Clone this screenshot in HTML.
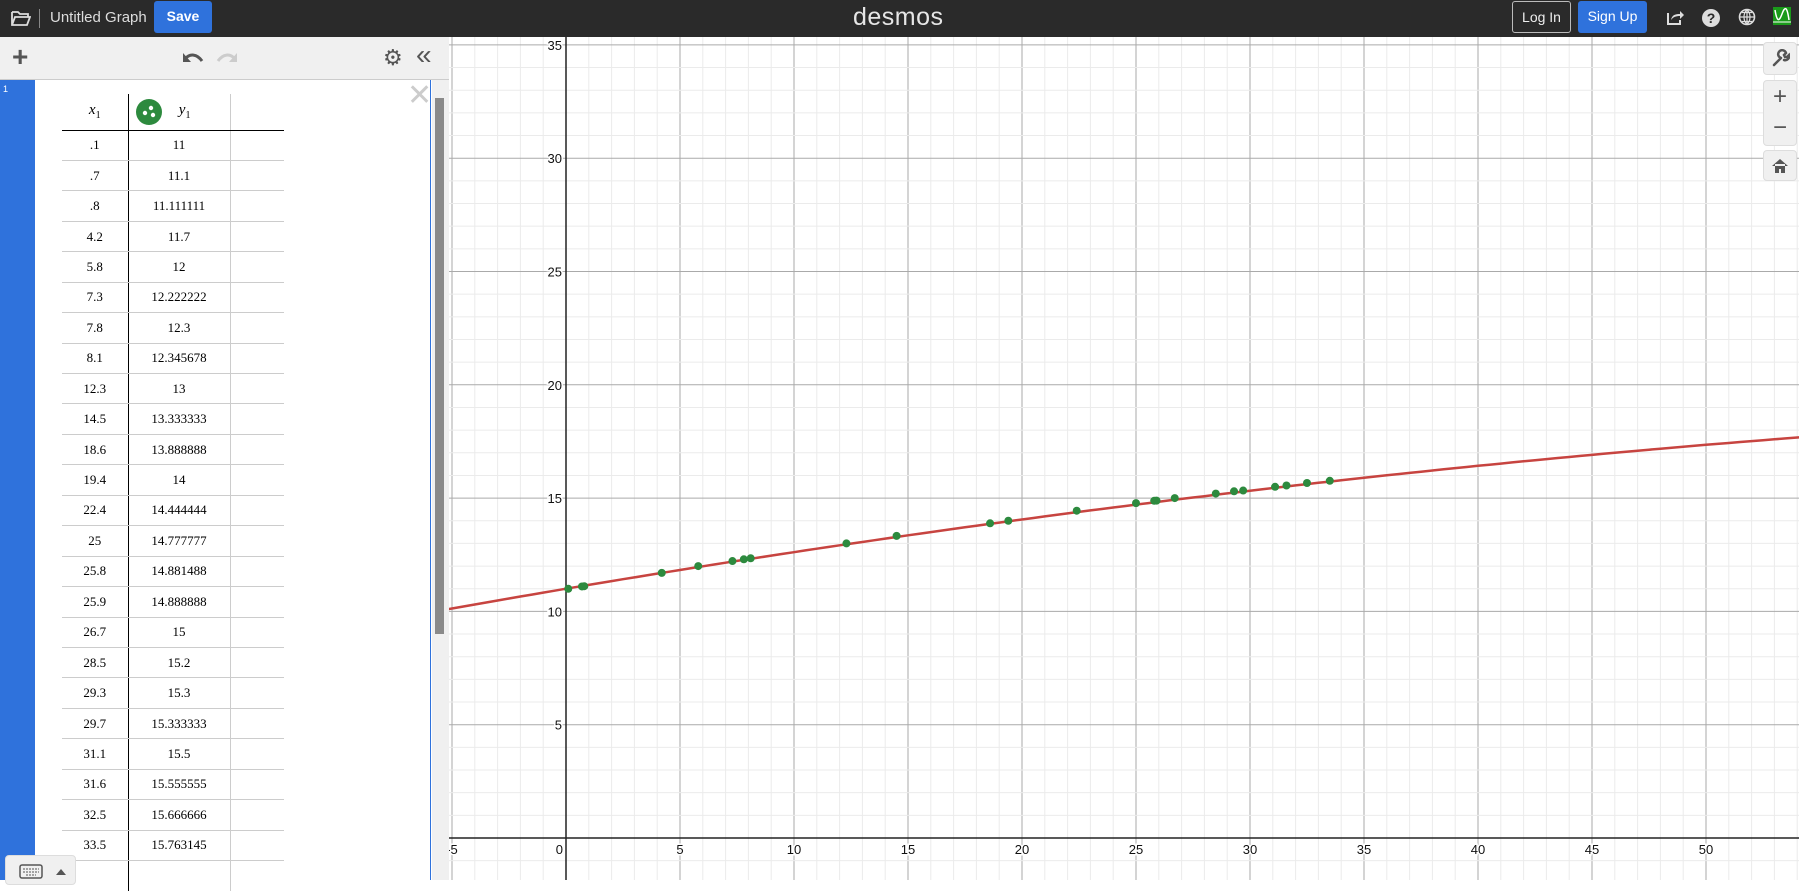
<!DOCTYPE html>
<html><head><meta charset="utf-8"><style>
*{box-sizing:border-box;margin:0;padding:0}
body{width:1799px;height:880px;overflow:hidden;font-family:"Liberation Sans",sans-serif;background:#fff;position:relative}
.top{position:absolute;left:0;top:0;width:1799px;height:37px;background:#2a2a2a;color:#fff}
.btn{position:absolute;border-radius:3px;font-size:14px;text-align:center;line-height:30px;height:32px;top:1px}
.panel{position:absolute;left:0;top:37px;width:449px;height:843px;background:#fff;border-right:1px solid #ccc}
.tb{position:absolute;left:0;top:0;width:449px;height:43px;background:#f0f0f0;border-bottom:1px solid #ccc}
table{position:absolute;left:62px;top:57px;border-collapse:collapse;font-family:"Liberation Serif",serif;font-size:13px}
td{height:30.45px;text-align:center;border-bottom:1px solid #ccc;border-right:1px solid #ccc}
td.a{width:66px;border-right:1px solid #000}
td.b{width:102px}
td.c{width:54px;border-right:none}
tr.h td{height:36px;border-bottom:1px solid #000;font-style:italic;font-size:15px}
.ctl{position:absolute;left:1763px;width:34px;background:#f0f0f0;border:1px solid #ddd;border-radius:4px;color:#555;text-align:center}
</style></head><body>
<div class="top">
<svg style="position:absolute;left:11px;top:10px" width="20" height="17" viewBox="0 0 20 17"><path d="M1 2h6l2 2h8v3M1 2v13h15l3-8H4L1 15" fill="none" stroke="#ddd" stroke-width="1.8"/></svg>
<div style="position:absolute;left:39px;top:9px;width:1px;height:19px;background:#888"></div>
<div style="position:absolute;left:50px;top:9px;font-size:15px;color:#ddd">Untitled Graph</div>
<div class="btn" style="left:154px;width:58px;background:#2f72dc;font-weight:bold">Save</div>
<div style="position:absolute;left:853px;top:3px;font-size:25px;color:#e6e6e6;letter-spacing:0.5px">desmos</div>
<div class="btn" style="left:1512px;width:59px;border:1px solid #bbb;color:#eee">Log In</div>
<div class="btn" style="left:1578px;width:69px;background:#2f72dc">Sign Up</div>
<svg style="position:absolute;left:1666px;top:9px" width="18" height="17"><path d="M2 4v11h12v-4" fill="none" stroke="#ddd" stroke-width="2"/><path d="M5 11c1-5 4-6 9-6V2l4 4-4 4V7c-4 0-7 1-9 4z" fill="#ddd"/></svg>
<div style="position:absolute;left:1702px;top:9px;width:18px;height:18px;border-radius:50%;background:#ddd;color:#2a2a2a;font-weight:bold;font-size:14px;text-align:center;line-height:18px">?</div>
<svg style="position:absolute;left:1738px;top:8px" width="20" height="20"><circle cx="9" cy="9" r="7.5" fill="none" stroke="#ddd" stroke-width="1.6"/><path d="M1.5 9h15M9 1.5v15M4 4.5h10M4 13.5h10M9 1.5c-4 4-4 11 0 15M9 1.5c4 4 4 11 0 15" fill="none" stroke="#ddd" stroke-width="1.2"/></svg>
<div style="position:absolute;left:1773px;top:7px;width:18px;height:18px;background:#1a9a1a"><svg width="18" height="18"><path d="M2 3c2 12 4 12 7 4s5-8 7 6" fill="none" stroke="#fff" stroke-width="1.5"/><path d="M0 15h18" stroke="#fff"/></svg></div>
</div>
<div class="panel">
<div class="tb">
<div style="position:absolute;left:12px;top:4px;font-size:28px;color:#555;font-weight:bold">+</div>
<svg style="position:absolute;left:182px;top:13px" width="56" height="18"><path d="M3 9c5-6 12-5 17 2" fill="none" stroke="#555" stroke-width="3"/><path d="M1 3v9h8z" fill="#555"/><path d="M53 9c-5-6-12-5-17 2" fill="none" stroke="#ccc" stroke-width="3"/><path d="M55 3v9h-8z" fill="#ccc"/></svg>
<div style="position:absolute;left:383px;top:8px;font-size:22px;color:#555">⚙</div>
<div style="position:absolute;left:416px;top:2px;font-size:28px;color:#555">«</div>
</div>
<div style="position:absolute;left:0;top:43px;width:35px;height:800px;background:#2f72dc;color:#fff;font-size:9px;padding:4px 3px">1</div>
<div style="position:absolute;left:430px;top:43px;width:1px;height:800px;background:#2f72dc"></div>
<div style="position:absolute;left:432px;top:43px;width:17px;height:800px;background:#f0f0f0"></div>
<div style="position:absolute;left:435px;top:61px;width:9px;height:536px;background:#8a8a8a"></div>
<div style="position:absolute;left:407px;top:44px;font-size:30px;color:#ccc;line-height:30px">✕</div>
<table>
<tr class="h"><td class="a">x<sub style="font-style:normal;font-size:10px">1</sub></td><td class="b" style="position:relative"><span style="position:absolute;left:7px;top:5px;width:26px;height:26px;border-radius:50%;background:#2d8a3e"><svg width="26" height="26"><circle cx="9" cy="14" r="2.2" fill="#fff"/><circle cx="15" cy="9" r="2.2" fill="#fff"/><circle cx="17" cy="16" r="2.2" fill="#fff"/></svg></span>&nbsp;&nbsp;&nbsp;y<sub style="font-style:normal;font-size:10px">1</sub></td><td class="c"></td></tr>
<tr><td class="a">.1</td><td class="b">11</td><td class="c"></td></tr>
<tr><td class="a">.7</td><td class="b">11.1</td><td class="c"></td></tr>
<tr><td class="a">.8</td><td class="b">11.111111</td><td class="c"></td></tr>
<tr><td class="a">4.2</td><td class="b">11.7</td><td class="c"></td></tr>
<tr><td class="a">5.8</td><td class="b">12</td><td class="c"></td></tr>
<tr><td class="a">7.3</td><td class="b">12.222222</td><td class="c"></td></tr>
<tr><td class="a">7.8</td><td class="b">12.3</td><td class="c"></td></tr>
<tr><td class="a">8.1</td><td class="b">12.345678</td><td class="c"></td></tr>
<tr><td class="a">12.3</td><td class="b">13</td><td class="c"></td></tr>
<tr><td class="a">14.5</td><td class="b">13.333333</td><td class="c"></td></tr>
<tr><td class="a">18.6</td><td class="b">13.888888</td><td class="c"></td></tr>
<tr><td class="a">19.4</td><td class="b">14</td><td class="c"></td></tr>
<tr><td class="a">22.4</td><td class="b">14.444444</td><td class="c"></td></tr>
<tr><td class="a">25</td><td class="b">14.777777</td><td class="c"></td></tr>
<tr><td class="a">25.8</td><td class="b">14.881488</td><td class="c"></td></tr>
<tr><td class="a">25.9</td><td class="b">14.888888</td><td class="c"></td></tr>
<tr><td class="a">26.7</td><td class="b">15</td><td class="c"></td></tr>
<tr><td class="a">28.5</td><td class="b">15.2</td><td class="c"></td></tr>
<tr><td class="a">29.3</td><td class="b">15.3</td><td class="c"></td></tr>
<tr><td class="a">29.7</td><td class="b">15.333333</td><td class="c"></td></tr>
<tr><td class="a">31.1</td><td class="b">15.5</td><td class="c"></td></tr>
<tr><td class="a">31.6</td><td class="b">15.555555</td><td class="c"></td></tr>
<tr><td class="a">32.5</td><td class="b">15.666666</td><td class="c"></td></tr>
<tr><td class="a">33.5</td><td class="b">15.763145</td><td class="c"></td></tr>
<tr><td class="a" style="border-bottom:none"></td><td class="b" style="border-bottom:none"></td><td class="c" style="border-bottom:none"></td></tr>
</table>
<div style="position:absolute;left:5px;top:818px;width:71px;height:30px;background:#f0f0f0;border:1px solid #ddd;border-radius:4px">
<svg style="position:absolute;left:13px;top:8px" width="48" height="16"><rect x="1" y="1" width="22" height="13" rx="2" fill="none" stroke="#555" stroke-width="1.5"/><path d="M4 5h16M4 8h16M7 11h10" stroke="#555" stroke-dasharray="2 1"/><path d="M37 11l5-6 5 6z" fill="#555"/></svg></div>
</div>
<svg id="g" style="position:absolute;left:449px;top:37px" width="1350" height="843"></svg>
<div class="ctl" style="top:42px;height:33px"><svg width="20" height="20" style="margin-top:6px"><path d="M4 16l7-7M11 9a4 4 0 1 1 5-5l-2 2 1 2 2 0 2-2a4 4 0 0 1-5 5" fill="none" stroke="#555" stroke-width="2.5" stroke-linecap="round"/></svg></div>
<div class="ctl" style="top:80px;height:66px;font-size:24px;line-height:31px">+<br>−</div>
<div class="ctl" style="top:150px;height:31px"><svg width="18" height="16" style="margin-top:7px"><path d="M1 8l8-7 8 7M4 6v9h4v-4h2v4h4V6" fill="#555"/></svg></div>
<script>
const g=document.getElementById('g');const ox=566-449,oy=838-37,sx=22.8,sy=22.66;let s='';
for(let i=-6;i<=56;i++){const x=ox+i*sx;s+=`<line x1="${x}" y1="0" x2="${x}" y2="843" stroke="${i%5?'#ebebeb':'#aaa'}" stroke-width="1"/>`}
for(let j=-2;j<=37;j++){const y=oy-j*sy;s+=`<line x1="0" y1="${y}" x2="1350" y2="${y}" stroke="${j%5?'#ebebeb':'#aaa'}" stroke-width="1"/>`}
s+=`<line x1="${ox}" y1="0" x2="${ox}" y2="843" stroke="#222" stroke-width="1.5"/><line x1="0" y1="${oy}" x2="1350" y2="${oy}" stroke="#222" stroke-width="1.5"/>`;
const tf='font-family="Liberation Sans" font-size="13" fill="#111"';
for(let i=-5;i<=55;i+=5){const x=ox+i*sx;if(i==0)s+=`<text x="${ox-3}" y="${oy+16}" text-anchor="end" ${tf}>0</text>`;else s+=`<text x="${x}" y="${oy+16}" text-anchor="middle" ${tf} stroke="#fff" stroke-width="3" paint-order="stroke">${i}</text>`}
for(let j=5;j<=35;j+=5){const y=oy-j*sy;s+=`<text x="${ox-4}" y="${y+5}" text-anchor="end" ${tf} stroke="#fff" stroke-width="3" paint-order="stroke">${j}</text>`}
let p='';for(let x=-5.5;x<=56;x+=0.5){const y=11+0.17*x-0.00086*x*x;p+=(p?'L':'M')+(ox+x*sx).toFixed(1)+' '+(oy-y*sy).toFixed(1)}
s+=`<path d="${p}" fill="none" stroke="#c74440" stroke-width="2.5"/>`;
const d=[[.1,11],[.7,11.1],[.8,11.111],[4.2,11.7],[5.8,12],[7.3,12.222],[7.8,12.3],[8.1,12.346],[12.3,13],[14.5,13.333],[18.6,13.889],[19.4,14],[22.4,14.444],[25,14.778],[25.8,14.881],[25.9,14.889],[26.7,15],[28.5,15.2],[29.3,15.3],[29.7,15.333],[31.1,15.5],[31.6,15.556],[32.5,15.667],[33.5,15.763]];
for(const [x,y] of d)s+=`<circle cx="${ox+x*sx}" cy="${oy-y*sy}" r="4" fill="#2d8a3e"/>`;
g.innerHTML=s;
</script>
</body></html>
